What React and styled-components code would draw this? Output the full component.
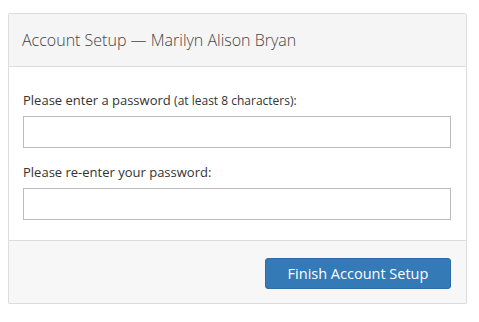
import React from "react";
import styled, { createGlobalStyle } from "styled-components";

const Global = createGlobalStyle`
  body {
    margin: 0;
    padding: 13px 0 0 8px;
    background: #fff;
    font-family: "Open Sans", "Liberation Sans", sans-serif;
    color: #333;
  }
`;

const Panel = styled.div`
  width: 459px;
  box-sizing: border-box;
  border: 1px solid #ddd;
  border-radius: 2px;
  background: #fff;
  box-shadow: 0 1px 1px rgba(0, 0, 0, 0.05);
`;

const Header = styled.div`
  height: 52px;
  display: flex;
  align-items: center;
  padding: 0 13px;
  background: #f5f5f5;
  border-bottom: 1px solid #ddd;
  font-size: 16px;
  font-weight: 300;
  color: #444;
`;

const Body = styled.div`
  padding: 25px 15px 20px 14px;
  display: flex;
  flex-direction: column;
`;

const Field = styled.div`
  display: flex;
  flex-direction: column;
  & + & {
    margin-top: 16px;
  }
`;

const Label = styled.label`
  font-size: 13px;
  line-height: 17px;
  color: #333;
  margin-bottom: 7px;

  small {
    font-size: 12px;
  }
`;

const Input = styled.input`
  height: 32px;
  box-sizing: border-box;
  border: 1px solid #bbb;
  border-radius: 0;
  padding: 4px 8px;
  font: inherit;
  font-size: 13px;
  outline: none;
`;

const Footer = styled.div`
  display: flex;
  justify-content: flex-end;
  padding: 17px 15px 14px;
  background: #f7f7f7;
  border-top: 1px solid #ddd;
`;

const Button = styled.button`
  width: 186px;
  height: 31px;
  border: 1px solid #2e6da4;
  border-radius: 3px;
  background: #337ab7;
  color: #fff;
  font-family: "Open Sans", "Liberation Sans", sans-serif;
  font-size: 14.5px;
  cursor: pointer;
`;

export default function App() {
  return (
    <>
      <Global />
      <Panel>
        <Header>Account Setup — Marilyn Alison Bryan</Header>
        <Body>
          <Field>
            <Label>
              Please enter a password <small>(at least 8 characters):</small>
            </Label>
            <Input type="password" />
          </Field>
          <Field>
            <Label>Please re-enter your password:</Label>
            <Input type="password" />
          </Field>
        </Body>
        <Footer>
          <Button>Finish Account Setup</Button>
        </Footer>
      </Panel>
    </>
  );
}
